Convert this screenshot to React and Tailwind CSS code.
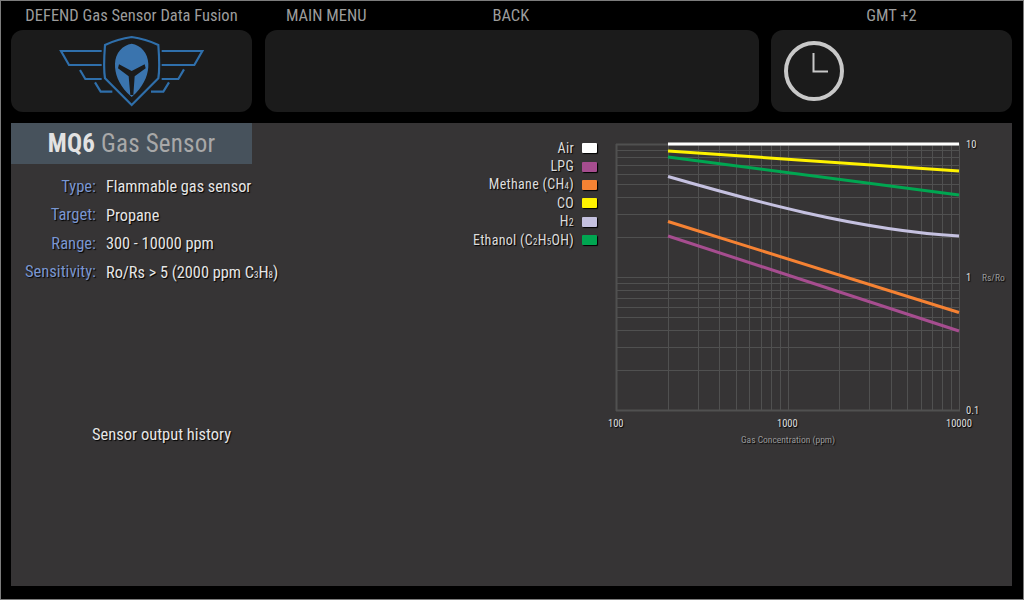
import React from 'react';

const specs = [
  { label: 'Type:', value: 'Flammable gas sensor' },
  { label: 'Target:', value: 'Propane' },
  { label: 'Range:', value: '300 - 10000 ppm' },
  { label: 'Sensitivity:', value: <>Ro/Rs &gt; 5 (2000 ppm C<sub className="text-[9px] static">3</sub>H<sub className="text-[9px] static">8</sub>)</> },
];

const legend = [
  { name: 'Air', swatch: 'bg-white' },
  { name: 'LPG', swatch: 'bg-[#a64d8f]' },
  { name: <>Methane (CH<sub className="text-[9px] static">4</sub>)</>, swatch: 'bg-[#f58233]' },
  { name: 'CO', swatch: 'bg-[#fff200]' },
  { name: <>H<sub className="text-[10px] static">2</sub></>, swatch: 'bg-[#c5c1e0]' },
  { name: <>Ethanol (C<sub className="text-[9px] static">2</sub>H<sub className="text-[9px] static">5</sub>OH)</>, swatch: 'bg-[#00a651]' },
];

// log grid positions, svg origin is at the 100 ppm / 10 Rs/Ro corner
const decadeX = 171.5;
const decadeY = 133;
const steps = [2, 3, 4, 5, 6, 7, 8, 9];
const crisp = (v) => Math.round(v) + 0.5;
const gridX = [];
const gridY = [];
[0, 1].forEach((d) => {
  gridX.push(crisp(d * decadeX));
  gridY.push(crisp(d * decadeY));
  steps.forEach((s) => {
    gridX.push(crisp((d + Math.log10(s)) * decadeX));
    gridY.push(crisp((d + 1 - Math.log10(s)) * decadeY));
  });
});
gridX.push(crisp(2 * decadeX));
gridY.push(crisp(2 * decadeY));

const curves = [
  { color: '#ffffff', d: 'M52 0H343' },
  { color: '#fff200', d: 'M52 7L343 27' },
  { color: '#00a651', d: 'M52 13L343 51' },
  { color: '#c5c1e0', d: 'M52 32.5C130 55 240 86 343 92' },
  { color: '#f58233', d: 'M52 77.5L343 168.5' },
  { color: '#a64d8f', d: 'M52 92L343 187' },
];

const Logo = () => (
  <svg viewBox="0 14 480 228" width="160" height="76" fill="none" stroke="#2f6fab" strokeWidth="6.5">
    <path d="M245 26C215 30 190 38 165 50C162 90 160 120 165 150L245 230L325 150C330 120 328 90 325 50C300 38 275 30 245 26Z" />
    <path d="M155 68H33L57 110H155" />
    <path d="M90 125L106 152H155" />
    <path d="M135 162L152 190H187" />
    <path d="M335 68H457L433 110H335" />
    <path d="M402 123L385 152H335" />
    <path d="M357 162L340 190H303" />
    <path
      fill="#3a74ae"
      stroke="none"
      d="M245 46C218 50 196 74 195 106C194 135 205 165 232 194L245 206L258 194C285 165 296 135 295 106C294 74 272 50 245 46Z"
    />
    <path fill="#1b1b1b" stroke="none" d="M207 108L245 128L284 108L287 120L254 144L250 200H241L236 144L204 120Z" />
  </svg>
);

const Clock = () => (
  <svg viewBox="0 0 60 60" width="60" height="60" fill="none" stroke="#c8c8c8">
    <circle cx="30" cy="30" r="28" strokeWidth="4" />
    <path d="M29.5 12V30.5H44" strokeWidth="2" />
  </svg>
);

const Chart = () => (
  <svg width="400" height="312" viewBox="-8 -8 400 312" className="shrink-0" fontFamily="'Roboto Condensed', Roboto, sans-serif">
    {gridX.map((x, i) => (
      <line key={x} x1={x} x2={x} y1="0" y2="267" stroke="#505050" strokeWidth={i === 0 ? 2 : 1} />
    ))}
    {gridY.map((y, i) => (
      <line key={y} x1="0" x2="344" y1={y} y2={y} stroke="#505050" strokeWidth={i === 0 || i === gridY.length - 1 ? 2 : 1} />
    ))}
    {curves.map((c) => (
      <path key={c.color} d={c.d} fill="none" stroke={c.color} strokeWidth="3" />
    ))}
    <g fill="#dedede" fontSize="10.5" style={{ textShadow: '1px 1px 1px #000' }}>
      <text x="350" y="4">10</text>
      <text x="350" y="137">1</text>
      <text x="350" y="270">0.1</text>
      <text x="-8" y="283">100</text>
      <text x="161" y="283">1000</text>
      <text x="330" y="283">10000</text>
    </g>
    <g fill="#9a9a9a" fontSize="9.5" style={{ textShadow: '1px 1px 1px #000' }}>
      <text x="366" y="137">Rs/Ro</text>
      <text x="125" y="299">Gas Concentration (ppm)</text>
    </g>
  </svg>
);

export default function App() {
  return (
    <div className="w-[1024px] h-[600px] bg-black border border-[#7c7c7c] px-[10px] font-['Roboto_Condensed',Roboto,sans-serif] overflow-hidden [font-stretch:75%]">
      {/* header labels */}
      <div className="grid grid-cols-[241px_13px_494px_12px_241px] h-[29px] pt-[1px] items-center text-[16.5px] text-[#9c9c9c]">
        <div className="text-center whitespace-nowrap">DEFEND Gas Sensor Data Fusion</div>
        <div />
        <div className="flex pl-[21px] gap-[126px]">
          <span>MAIN MENU</span>
          <span>BACK</span>
        </div>
        <div />
        <div className="text-center">GMT +2</div>
      </div>

      {/* header panels */}
      <div className="grid grid-cols-[241px_13px_494px_12px_241px] h-[82px]">
        <div className="bg-[#1b1b1b] rounded-xl flex justify-center items-center pr-[3px]">
          <Logo />
        </div>
        <div />
        <div className="bg-[#1b1b1b] rounded-xl" />
        <div />
        <div className="bg-[#1b1b1b] rounded-xl flex items-center pl-[13px] pb-[1px]">
          <Clock />
        </div>
      </div>

      {/* sensor panel */}
      <div className="mt-[11px] w-[1001px] h-[463px] bg-[#363435] flex">
        <div className="w-[241px] shrink-0">
          <div className="h-[41px] bg-[#47525c] flex items-center justify-center text-[25px] tracking-[0.2px] text-[#a8a8a8]">
            <span><b className="font-bold text-[#e2e2e2]">MQ6</b> Gas Sensor</span>
          </div>
          <div className="mt-[9px] flex flex-col [text-shadow:1px_1px_1px_#000]">
            {specs.map((row) => (
              <div key={row.label} className="flex h-[28.5px] items-center whitespace-nowrap">
                <span className="w-[85px] shrink-0 text-right text-[16.6px] text-[#7a96d0]">{row.label}</span>
                <span className="ml-[10px] text-[16.3px] text-[#e6e6e6]">{row.value}</span>
              </div>
            ))}
          </div>
          <div className="mt-[136px] pl-[81px] text-[16.5px] text-[#e6e6e6] whitespace-nowrap [text-shadow:1px_1px_1px_#000]">
            Sensor output history
          </div>
        </div>

        <div className="w-[356px] shrink-0 pt-[16px] pr-[11px] flex flex-col items-end text-[14px] tracking-[0.3px] text-[#dcdcdc] [text-shadow:1px_1px_1px_#000]">
          {legend.map((item, i) => (
            <div key={i} className="flex h-[18.4px] items-center gap-[8px] whitespace-nowrap">
              <span>{item.name}</span>
              <span className={`w-[15px] h-[10px] rounded-[1px] shadow-[1px_1px_1px_#000] ${item.swatch}`} />
            </div>
          ))}
        </div>

        <div className="pt-[13px]">
          <Chart />
        </div>
      </div>
    </div>
  );
}
